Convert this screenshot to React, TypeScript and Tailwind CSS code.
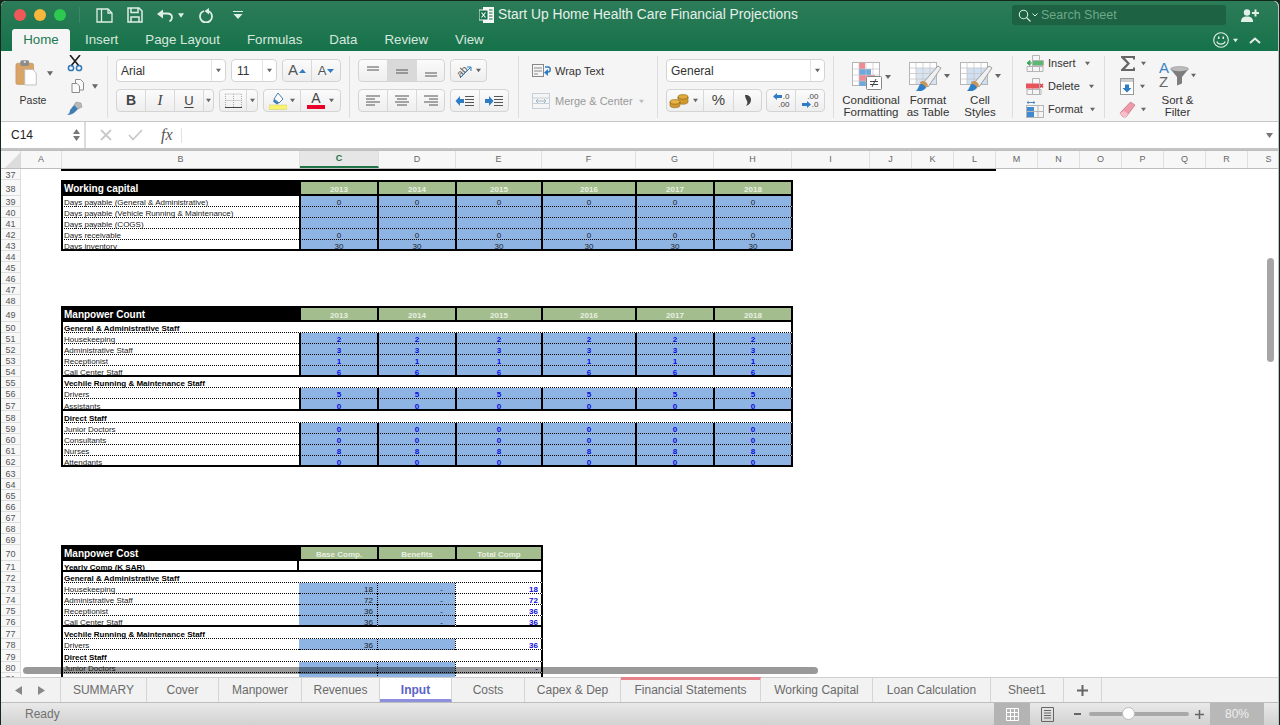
import React from "react";

const DOT = "border-b border-b-black [border-bottom-style:dotted]";
const THICK = "border-b-2 border-b-black";
const DOTL = "border-l border-l-black [border-left-style:dotted]";

function Caret({ c = "#666", w = 7 }: { c?: string; w?: number }) {
  return (
    <svg width={w} height="5" viewBox="0 0 7 5" className="shrink-0">
      <path d="M0 0h7L3.5 5z" fill={c} />
    </svg>
  );
}

function Sep() {
  return <div className="w-px h-[62px] mt-[5px] bg-[#dddddd] shrink-0" />;
}

function Btn({ w, active, children, last }: { w: string; active?: boolean; children?: React.ReactNode; last?: boolean }) {
  return (
    <div
      className={`${w} h-full flex items-center justify-center ${last ? "" : "border-r border-r-[#d9d9d9]"} ${
        active ? "bg-[#d9d9d9]" : ""
      }`}
    >
      {children}
    </div>
  );
}

function Group({ w, children }: { w: string; children?: React.ReactNode }) {
  return (
    <div className={`${w} h-[23px] flex items-stretch rounded-[4px] border border-[#d4d4d4] bg-linear-to-b from-[#fbfbfb] to-[#eeeeee] overflow-hidden shrink-0`}>
      {children}
    </div>
  );
}

function Lines({ rows, c = "#555" }: { rows: number[][]; c?: string }) {
  return (
    <svg width="16" height="14" viewBox="0 0 16 14" fill="none">
      {rows.map((r, i) => (
        <path key={i} d={`M${r[0]} ${r[2]}H${r[1]}`} stroke={c} strokeWidth="1" />
      ))}
    </svg>
  );
}

function Indent({ right }: { right?: boolean }) {
  return (
    <svg width="20" height="14" viewBox="0 0 20 14" fill="none">
      <path d="M10 2.5h9M10 5.5h9M10 8.5h9M10 11.5h9" stroke="#555" strokeWidth="1" />
      {right ? (
        <path d="M1 5h4V2l4.5 5L5 12V9H1z" fill="#2d7cc4" />
      ) : (
        <path d="M9 5H5V2L.5 7 5 12V9h4z" fill="#2d7cc4" />
      )}
    </svg>
  );
}

function PaintBrush() {
  return (
    <g>
      <path d="M14 21 L29 4 L32 6 L19 25z" fill="#f0f0f0" stroke="#8a8a8a" strokeWidth=".8" />
      <path d="M11 20 c3-2 6-1 8 3 l-2 3 -5-2z" fill="#c9955a" />
      <path d="M4 30 c4 0 5-4 7-8 c2-.5 5 1 6 4 c-3 3-8 5-13 4z" fill="#2f7fc6" />
    </g>
  );
}

function TableGrid({ fill }: { fill: string }) {
  return (
    <g>
      <rect x=".5" y=".5" width="27" height="22" fill="#fff" stroke="#b5b5b5" />
      <rect x="7" y="6" width="20" height="16" fill={fill} />
      <path d="M.5 6h27M.5 11.5h27M.5 17h27M7 .5v22M14 .5v22M21 .5v22" stroke="#c6c6c6" strokeWidth=".8" />
    </g>
  );
}

function Ribbon() {
  return (
    <div className="flex h-[70px] items-start bg-[#f5f5f5] shrink-0">
      {/* Clipboard */}
      <div className="w-[106px] flex shrink-0">
        <div className="ml-[14px] w-[38px] pt-[6px] flex flex-col">
          <div className="flex items-center">
            <svg width="26" height="32" viewBox="0 0 26 32">
              <rect x="1" y="5" width="20" height="24" rx="2" fill="#d9a468" stroke="#b98a52" strokeWidth=".6" />
              <rect x="6" y="1.5" width="10" height="6.5" rx="2" fill="#8c8c8c" />
              <circle cx="11" cy="3.5" r="1.2" fill="#eee" />
              <path d="M11 12h9l4 4v13.5H11z" fill="#fff" stroke="#bcbcbc" />
            </svg>
            <div className="ml-[9px]">
              <Caret w={6} />
            </div>
          </div>
          <div className="mt-[5px] w-[36px] text-center text-[10.5px] leading-[12px] text-[#333]">Paste</div>
        </div>
        <div className="ml-[13px] flex flex-col items-center pt-[4px]">
          <svg width="16" height="17" viewBox="0 0 16 17" fill="none">
            <path d="M3 0l9 11M13 0L4 11" stroke="#1d1d1d" strokeWidth="1.6" />
            <circle cx="4" cy="13" r="2.6" stroke="#2f78b7" strokeWidth="1.5" />
            <circle cx="12" cy="13" r="2.6" stroke="#2f78b7" strokeWidth="1.5" />
          </svg>
          <div className="flex items-center mt-[6px] -mr-[18px]">
            <svg width="16" height="16" viewBox="0 0 16 16" fill="#fafafa" stroke="#8c8c8c">
              <path d="M5.5 1.5h5l3 3v7.5h-8z" />
              <path d="M2 5.5h5l2.500 2.500v6.500H2z" />
            </svg>
            <div className="ml-[6px]">
              <Caret w={6} />
            </div>
          </div>
          <svg width="17" height="16" viewBox="0 0 17 16" className="mt-[7px]">
            <path d="M10 1l5 1 1 4-4 2-4-4z" fill="#b8b8b8" stroke="#888" strokeWidth=".5" />
            <path d="M8 4l4 4-3 3c-1 1-4 3-8 3 2-1 3-3 3-5z" fill="#3f7db4" />
          </svg>
        </div>
      </div>
      <Sep />
      {/* Font */}
      <div className="ml-[8px] mt-[8px] w-[225px] flex flex-col gap-[7px] shrink-0">
        <div className="flex gap-[5px]">
          <div className="w-[110px] h-[23px] flex items-center rounded-[4px] border border-[#d4d4d4] bg-white pl-[4px] text-[12px] text-[#333]">
            <span className="flex-1">Arial</span>
            <div className="w-[14px] h-[21px] border-l border-l-[#e3e3e3] flex items-center justify-center">
              <Caret w={5} />
            </div>
          </div>
          <div className="w-[46px] h-[23px] flex items-center rounded-[4px] border border-[#d4d4d4] bg-white pl-[5px] text-[12px] text-[#333]">
            <span className="flex-1">11</span>
            <div className="w-[14px] h-[21px] border-l border-l-[#e3e3e3] flex items-center justify-center">
              <Caret w={5} />
            </div>
          </div>
          <Group w="w-[59px]">
            <Btn w="w-[29px]">
              <span className="text-[15px] text-[#555]">A</span>
              <svg width="7" height="4" viewBox="0 0 7 4" className="ml-px">
                <path d="M0 4h7L3.5 0z" fill="#2d7cc4" />
              </svg>
            </Btn>
            <Btn w="flex-1" last>
              <span className="text-[13px] text-[#555]">A</span>
              <svg width="7" height="4" viewBox="0 0 7 4" className="ml-px">
                <path d="M0 0h7L3.5 4z" fill="#2d7cc4" />
              </svg>
            </Btn>
          </Group>
        </div>
        <div className="flex gap-[5px]">
          <Group w="w-[98px]">
            <Btn w="w-[29px]">
              <span className="text-[14px] font-bold text-[#444]">B</span>
            </Btn>
            <Btn w="w-[29px]">
              <span className="text-[15px] italic font-['Liberation_Serif',serif] text-[#444]">I</span>
            </Btn>
            <Btn w="w-[29px]">
              <span className="text-[13px] text-[#444] underline underline-offset-2">U</span>
            </Btn>
            <Btn w="flex-1" last>
              <Caret w={5} />
            </Btn>
          </Group>
          <Group w="w-[39px]">
            <Btn w="w-[27px]">
              <svg width="17" height="16" viewBox="0 0 17 16" fill="none">
                <path d="M.5 1h16M.5 7.500h16M.5 1v13M8.500 1v13M16.500 1v13" stroke="#aaa" strokeDasharray="1 1" />
                <path d="M0 14.500h17" stroke="#444" />
              </svg>
            </Btn>
            <Btn w="flex-1" last>
              <Caret w={5} />
            </Btn>
          </Group>
          <Group w="w-[78px]">
            <div className="w-[37px] h-full flex items-center justify-center gap-[3px] border-r border-r-[#d9d9d9]">
              <svg width="18" height="18" viewBox="0 0 18 18">
                <path d="M9 1l5 6-4 4-5-4z" fill="#fff" stroke="#4a7fb0" />
                <path d="M5 7l5 4-2 1.500-4-3z" fill="#3f7db4" />
                <rect x="0" y="13" width="18" height="4.500" fill="#fbf36b" stroke="#c9c97a" strokeWidth=".5" />
              </svg>
              <Caret w={5} />
            </div>
            <div className="flex-1 flex items-center justify-center gap-[4px]">
              <div className="flex flex-col items-center w-[18px]">
                <span className="text-[14px] leading-[12px] text-[#444]">A</span>
                <div className="w-[18px] h-[4px] mt-px bg-[#e8002a]" />
              </div>
              <Caret w={5} />
            </div>
          </Group>
        </div>
      </div>
      <div className="ml-[8px]">
        <Sep />
      </div>
      {/* Alignment */}
      <div className="ml-[8px] mt-[8px] flex flex-col gap-[7px] shrink-0">
        <div className="flex gap-[5px]">
          <Group w="w-[87px]">
            <Btn w="w-[29px]">
              <Lines rows={[[2, 14, 3], [2, 14, 6]]} />
            </Btn>
            <Btn w="w-[29px]" active>
              <Lines rows={[[2, 14, 6], [2, 14, 9]]} />
            </Btn>
            <Btn w="flex-1" last>
              <Lines rows={[[2, 14, 9], [2, 14, 12]]} />
            </Btn>
          </Group>
          <Group w="w-[37px]">
            <div className="flex-1 flex items-center justify-center gap-[4px]">
              <div className="relative w-[16px] h-[16px]">
                <span className="block -rotate-45 text-[10px] leading-[14px] text-[#555]">ab</span>
                <svg width="16" height="16" viewBox="0 0 16 16" className="absolute left-0 top-0">
                  <path d="M4 15L15 4M11 4h4v4" stroke="#2d7cc4" fill="none" />
                </svg>
              </div>
              <Caret w={5} />
            </div>
          </Group>
        </div>
        <div className="flex gap-[5px]">
          <Group w="w-[87px]">
            <Btn w="w-[29px]">
              <Lines rows={[[1, 15, 2], [1, 10, 5], [1, 15, 8], [1, 10, 11]]} />
            </Btn>
            <Btn w="w-[29px]">
              <Lines rows={[[1, 15, 2], [3, 13, 5], [1, 15, 8], [3, 13, 11]]} />
            </Btn>
            <Btn w="flex-1" last>
              <Lines rows={[[1, 15, 2], [6, 15, 5], [1, 15, 8], [6, 15, 11]]} />
            </Btn>
          </Group>
          <Group w="w-[59px]">
            <Btn w="w-[29px]">
              <Indent />
            </Btn>
            <Btn w="flex-1" last>
              <Indent right />
            </Btn>
          </Group>
        </div>
      </div>
      <div className="ml-[9px]">
        <Sep />
      </div>
      {/* Wrap */}
      <div className="ml-[13px] w-[125px] shrink-0 flex flex-col mt-[9px] gap-[8px]">
        <div className="flex items-center h-[22px]">
          <svg width="20" height="14" viewBox="0 0 20 14" fill="none">
            <rect x=".5" y=".5" width="11" height="12" stroke="#888" />
            <path d="M2 4h8M2 7h8M2 10h4" stroke="#888" />
            <path d="M13 3h3c3 0 3 5 0 5h-1" stroke="#2d7cc4" strokeWidth="1.4" />
            <path d="M16 5v7l-4-3.500z" fill="#2d7cc4" />
          </svg>
          <span className="ml-[3px] text-[11px] text-[#333]">Wrap Text</span>
        </div>
        <div className="flex items-center h-[22px]">
          <svg width="18" height="16" viewBox="0 0 18 16" fill="none" stroke="#c6d0d8">
            <rect x=".5" y=".5" width="17" height="15" />
            <path d="M.5 5h17M.5 10.500h17" />
            <path d="M4 8h10M4 8l2-2M4 8l2 2M14 8l-2-2M14 8l-2 2" stroke="#9fb6c8" />
          </svg>
          <span className="ml-[5px] text-[11px] text-[#999]">Merge &amp; Center</span>
          <div className="ml-[6px]">
            <Caret w={5} c="#bbb" />
          </div>
        </div>
      </div>
      <Sep />
      {/* Number */}
      <div className="ml-[8px] mt-[8px] w-[159px] flex flex-col gap-[7px] shrink-0">
        <div className="h-[23px] flex items-center rounded-[4px] border border-[#d4d4d4] bg-white pl-[4px] text-[12px] text-[#333]">
          <span className="flex-1">General</span>
          <div className="w-[14px] h-[21px] border-l border-l-[#e3e3e3] flex items-center justify-center">
            <Caret w={5} />
          </div>
        </div>
        <div className="flex gap-[4px]">
          <Group w="w-[96px]">
            <div className="w-[37px] h-full flex items-center pl-[2px] gap-[4px] border-r border-r-[#d9d9d9]">
              <svg width="20" height="16" viewBox="0 0 20 16">
                <ellipse cx="14" cy="4" rx="5" ry="2.400" fill="#e0a93a" stroke="#8b6a1e" strokeWidth=".6" />
                <path d="M9 4v5c0 3 10 3 10 0V4c0 3-10 3-10 0z" fill="#d2982e" stroke="#8b6a1e" strokeWidth=".6" />
                <ellipse cx="6" cy="9" rx="5" ry="2.400" fill="#eab344" stroke="#8b6a1e" strokeWidth=".6" />
                <path d="M1 9v3.500c0 3 10 3 10 0V9c0 3-10 3-10 0z" fill="#d2982e" stroke="#8b6a1e" strokeWidth=".6" />
              </svg>
              <Caret w={5} />
            </div>
            <Btn w="w-[30px]">
              <span className="text-[15px] text-[#444]">%</span>
            </Btn>
            <Btn w="flex-1" last>
              <svg width="8" height="13" viewBox="0 0 8 13">
                <path d="M1 1c4-.5 6 2 6 5 0 3-2 5-5 6 1-2 2-3 1-5C2 5 1 3 1 1z" fill="#444" />
              </svg>
            </Btn>
          </Group>
          <Group w="w-[59px]">
            <Btn w="w-[29px]">
              <div className="flex flex-col items-end text-[8px] leading-[8px] text-[#444]">
                <span className="flex items-center">
                  <svg width="9" height="7" viewBox="0 0 9 7">
                    <path d="M9 2H4V0L0 3.500 4 7V5h5z" fill="#2d7cc4" />
                  </svg>
                  <span className="ml-px">.0</span>
                </span>
                <span>.00</span>
              </div>
            </Btn>
            <Btn w="flex-1" last>
              <div className="flex flex-col items-end text-[8px] leading-[8px] text-[#444]">
                <span>.00</span>
                <span className="flex items-center">
                  <svg width="9" height="7" viewBox="0 0 9 7">
                    <path d="M0 2h5V0l4 3.500L5 7V5H0z" fill="#2d7cc4" />
                  </svg>
                  <span className="ml-px">.0</span>
                </span>
              </div>
            </Btn>
          </Group>
        </div>
      </div>
      <div className="ml-[8px]">
        <Sep />
      </div>
      {/* Styles */}
      <div className="w-[178px] shrink-0 flex text-[11.500px] leading-[12px] text-[#333]">
        <div className="w-[74px] flex flex-col items-center pt-[11px] whitespace-nowrap">
          <svg width="48" height="29" viewBox="0 0 48 29" className="mb-[3px]">
            <g transform="translate(5 0)">
              <rect x=".5" y=".5" width="27" height="23" fill="#fff" stroke="#b5b5b5" />
              <rect x="7" y="1" width="6" height="6" fill="#ef8a94" />
              <rect x="7" y="7" width="12" height="6" fill="#6ea8dc" />
              <rect x="7" y="13" width="16" height="6" fill="#ef8a94" />
              <rect x="7" y="19" width="8" height="5" fill="#6ea8dc" />
              <path d="M.5 7h27M.5 13h27M.5 19h27M7 .5v23M14 .5v23M21 .5v23" stroke="#c6c6c6" strokeWidth=".7" />
              <rect x="14.500" y="14.500" width="15" height="13" rx="1" fill="#fff" stroke="#888" />
              <path d="M18 19.500h8M18 22.500h8M24 17l-4 8" stroke="#444" />
            </g>
            <path d="M38 13h6l-3 4z" fill="#666" />
          </svg>
          <span>Conditional</span>
          <span>Formatting</span>
        </div>
        <div className="w-[40px] flex flex-col items-center pt-[11px] whitespace-nowrap">
          <svg width="48" height="29" viewBox="0 0 48 29" className="mb-[3px] shrink-0">
            <g transform="translate(5 0)">
              <TableGrid fill="#d8e4f2" />
              <PaintBrush />
            </g>
            <path d="M40 12h6l-3 4z" fill="#666" />
          </svg>
          <span>Format</span>
          <span>as Table</span>
        </div>
        <div className="w-[64px] flex flex-col items-center pt-[11px] whitespace-nowrap">
          <svg width="48" height="29" viewBox="0 0 48 29" className="mb-[3px]">
            <g transform="translate(4 0)">
              <TableGrid fill="#cfe0f3" />
              <PaintBrush />
            </g>
            <path d="M39 12h6l-3 4z" fill="#666" />
          </svg>
          <span>Cell</span>
          <span>Styles</span>
        </div>
      </div>
      <Sep />
      {/* Cells */}
      <div className="ml-[13px] w-[78px] shrink-0 mt-[1px] flex flex-col text-[11px] text-[#333]">
        <div className="h-[23px] flex items-center">
          <svg width="18" height="17" viewBox="0 0 18 17" fill="none">
            <path d="M6.500.5h7v16h-7zM1 11.500h16v5H1zM6.500 5.500h11v5h-11z" stroke="#b5b5b5" />
            <rect x="7" y="6" width="10" height="4" fill="#5aba6f" />
            <path d="M6 8H2M4 5.500L1 8l3 2.500z" fill="#3aa857" stroke="#3aa857" />
          </svg>
          <span className="ml-[4px]">Insert</span>
          <div className="ml-[9px]">
            <Caret w={5} />
          </div>
        </div>
        <div className="h-[23px] flex items-center">
          <svg width="18" height="17" viewBox="0 0 18 17" fill="none">
            <path d="M6.500.5h7v16h-7zM1 11.500h14v5H1z" stroke="#b5b5b5" />
            <rect x="0" y="5.500" width="13" height="5" fill="#e8525a" />
            <path d="M14 6l3 3.500M17 6l-3 3.500" stroke="#d83a42" strokeWidth="1.300" />
          </svg>
          <span className="ml-[4px]">Delete</span>
          <div className="ml-[9px]">
            <Caret w={5} />
          </div>
        </div>
        <div className="h-[23px] flex items-center">
          <svg width="18" height="17" viewBox="0 0 18 17" fill="none">
            <rect x=".5" y="4.500" width="17" height="12" stroke="#b5b5b5" />
            <rect x="1" y="6" width="7" height="10" fill="#3f8ad0" />
            <path d="M12 4.500v12M.5 10.500h17" stroke="#b5b5b5" />
            <path d="M1 1.500h8M1 1.500l1.500-1M1 1.500l1.500 1M9 1.500l-1.500-1M9 1.500l-1.500 1" stroke="#4a87c0" />
          </svg>
          <span className="ml-[4px]">Format</span>
          <div className="ml-[7px]">
            <Caret w={5} />
          </div>
        </div>
      </div>
      <Sep />
      {/* Editing */}
      <div className="ml-[15px] w-[30px] shrink-0 mt-[1px] flex flex-col">
        <div className="h-[23px] flex items-center">
          <svg width="15" height="15" viewBox="0 0 15 15" className="ml-[1px]">
            <path d="M0 0h14v3.500h-2V2H4l5 5.500L4 13h8v-1.500h2V15H0v-1.500L6 7.500 0 1.500z" fill="#666" />
          </svg>
          <div className="ml-[5px]">
            <Caret w={5} />
          </div>
        </div>
        <div className="h-[23px] flex items-center">
          <svg width="15" height="17" viewBox="0 0 15 17" fill="none">
            <rect x=".5" y=".5" width="13" height="16" fill="#fff" stroke="#999" />
            <rect x="1" y="1" width="12" height="3" fill="#ccc" />
            <path d="M5 6.500h4v3.500h2.500L7 14.500 2.500 10H5z" fill="#2d7cc4" />
          </svg>
          <div className="ml-[5px]">
            <Caret w={5} />
          </div>
        </div>
        <div className="h-[23px] flex items-center -ml-[1px]">
          <svg width="17" height="17" viewBox="0 0 17 17">
            <path d="M11.500 1L16 4 7 16l-3 0L1 12z" fill="#ee9aa8" stroke="#c07080" strokeWidth=".7" />
            <path d="M1 12l3 4h3l2-3-4-3z" fill="#f6c0ca" />
          </svg>
          <div className="ml-[5px]">
            <Caret w={5} />
          </div>
        </div>
      </div>
      <div className="w-[55px] shrink-0 flex flex-col items-center pt-[8px] whitespace-nowrap text-[11.500px] leading-[12px] text-[#333]">
        <div className="flex items-center h-[32px] mb-[3px]">
          <div className="flex flex-col w-[11px] text-[15px] leading-[14px] font-medium">
            <span className="text-[#3d84c6]">A</span>
            <span className="text-[#666]">Z</span>
          </div>
          <svg width="19" height="20" viewBox="0 0 19 20" className="mt-[2px]">
            <ellipse cx="9.500" cy="3" rx="9" ry="2.500" fill="#bbb" stroke="#888" strokeWidth=".5" />
            <path d="M.5 3l6.500 8v8.500l5-2V11l6.500-8c-2 3-16 3-18 0z" fill="#7d7d7d" />
          </svg>
          <div className="ml-[2px]">
            <Caret w={5} />
          </div>
        </div>
        <span>Sort &amp;</span>
        <span>Filter</span>
      </div>
    </div>
  );
}

function TitleBar() {
  return (
    <div className="h-[50px] shrink-0 rounded-t-[5px] bg-linear-to-b from-[#2c7c58] to-[#15724a] flex flex-col">
      <div className="h-[28px] flex items-center">
        <div className="ml-[13px] flex gap-[8px]">
          <div className="w-[12px] h-[12px] rounded-full bg-[#f0595a]" />
          <div className="w-[12px] h-[12px] rounded-full bg-[#f6b73c]" />
          <div className="w-[12px] h-[12px] rounded-full bg-[#2cc84f]" />
        </div>
        <div className="ml-[13px] w-px h-[16px] bg-white/10" />
        <svg width="17" height="15" viewBox="0 0 17 15" fill="none" stroke="#dfeee6" strokeWidth="1.300" className="ml-[16px]">
          <path d="M1 1h11l4 4v9H1z" />
          <path d="M5.500 1v13M12 1v4h4" />
        </svg>
        <svg width="16" height="16" viewBox="0 0 16 16" fill="none" stroke="#dfeee6" strokeWidth="1.500" className="ml-[14px]">
          <path d="M1 1h11l3 3v11H1z" />
          <path d="M4 1v4.500h7V1M4 15v-5h8v5" />
        </svg>
        <svg width="16" height="13" viewBox="0 0 16 13" fill="none" className="ml-[14px]">
          <path d="M5 4.500h5c3 0 5 1.500 5 4 0 2-1 3-2.500 4" stroke="#dfeee6" strokeWidth="1.800" />
          <path d="M0 5l6-4.500v9z" fill="#dfeee6" />
        </svg>
        <div className="ml-[5px]">
          <Caret w={6} c="#dfeee6" />
        </div>
        <svg width="15" height="15" viewBox="0 0 15 15" fill="none" className="ml-[15px]">
          <path d="M5 3C2 4 1 6 1 8.500a6 6 0 0 0 12 0C13 6 11.500 4 9 3" stroke="#dfeee6" strokeWidth="1.800" />
          <path d="M10 0v6.500L5.500 3z" fill="#dfeee6" />
        </svg>
        <svg width="12" height="8" viewBox="0 0 12 8" className="ml-[18px]">
          <path d="M1 .5h10" stroke="#dfeee6" strokeWidth="1.200" />
          <path d="M1.500 3h9L6 8z" fill="#dfeee6" />
        </svg>
        <svg width="15" height="16" viewBox="0 0 15 16" className="ml-[235px]">
          <rect x="4" y="0" width="11" height="16" fill="#f4f7f5" />
          <rect x="0" y="3" width="9" height="10" fill="#17704a" stroke="#f4f7f5" />
          <path d="M2.500 5.500l4 5M6.500 5.500l-4 5" stroke="#f4f7f5" strokeWidth="1.200" />
          <path d="M10 3h3.500M10 6h3.500M10 9h3.500M10 12h3.500" stroke="#17704a" />
        </svg>
        <span className="ml-[4px] text-[13.800px] text-[#e4f0ea] whitespace-nowrap">Start Up Home Health Care Financial Projections</span>
        <div className="ml-auto w-[214px] h-[20px] rounded-[3px] bg-[#1c6243] flex items-center pl-[6px]">
          <svg width="13" height="13" viewBox="0 0 13 13" fill="none" stroke="#dcebe3" strokeWidth="1.100">
            <circle cx="5.500" cy="5.500" r="4.200" />
            <path d="M8.500 8.500L12.500 12.500" />
          </svg>
          <svg width="6" height="4" viewBox="0 0 6 4" fill="none" stroke="#dcebe3" className="ml-[1px]">
            <path d="M.5.500L3 3 5.500.500" />
          </svg>
          <span className="ml-[3px] text-[12.500px] text-[#6ea98a]">Search Sheet</span>
        </div>
        <svg width="18" height="13" viewBox="0 0 18 13" className="ml-[15px] mr-[19px]">
          <circle cx="6" cy="3.500" r="3.200" fill="#e3efe9" />
          <path d="M0 13c0-4 2-5.500 6-5.500s6 1.500 6 5.500z" fill="#e3efe9" />
          <path d="M11 4h7M14.500 .5v7" stroke="#e3efe9" strokeWidth="2" />
        </svg>
      </div>
      <div className="h-[22px] flex items-stretch text-[13.300px] font-medium text-[#d8e8df]">
        <div className="ml-[11px] w-[58px] h-[22px] rounded-t-[3px] bg-[#f5f5f5] flex items-center justify-center text-[#217a52]">Home</div>
        <div className="ml-[15px] flex items-center gap-[27px]">
          <span>Insert</span>
          <span>Page Layout</span>
          <span>Formulas</span>
          <span>Data</span>
          <span>Review</span>
          <span>View</span>
        </div>
        <div className="ml-auto flex items-center mr-[17px]">
          <svg width="16" height="16" viewBox="0 0 16 16" fill="none" stroke="#e3efe9" strokeWidth="1.100">
            <circle cx="8" cy="8" r="7.300" />
            <path d="M3.800 9.500c1.200 3.500 7 3.500 8.400 0" />
            <path d="M5.700 4.500v2.500M10.300 4.500v2.500" strokeWidth="1.500" />
          </svg>
          <div className="ml-[4px]">
            <Caret w={5} c="#e3efe9" />
          </div>
          <svg width="12" height="7" viewBox="0 0 12 7" fill="none" stroke="#e3efe9" strokeWidth="2" className="ml-[11px]">
            <path d="M1 6l5-4.500L11 6" />
          </svg>
        </div>
      </div>
    </div>
  );
}

function FormulaBar() {
  return (
    <div className="h-[29px] shrink-0 flex items-center bg-white border-b-2 border-b-[#c4c4c4] border-t border-t-[#c8c8c8]">
      <div className="w-[85px] h-[26px] flex items-center pl-[10px] border-r-2 border-r-[#dcdcdc] text-[12px] text-[#222]">
        <span className="flex-1">C14</span>
        <div className="mr-[4px] flex flex-col gap-[2px]">
          <svg width="7" height="5" viewBox="0 0 7 5">
            <path d="M0 5h7L3.500 0z" fill="#777" />
          </svg>
          <svg width="7" height="5" viewBox="0 0 7 5">
            <path d="M0 0h7L3.500 5z" fill="#777" />
          </svg>
        </div>
      </div>
      <svg width="12" height="12" viewBox="0 0 12 12" fill="none" stroke="#c9c9c9" strokeWidth="1.800" className="ml-[14px]">
        <path d="M1 1l10 10M11 1L1 11" />
      </svg>
      <svg width="15" height="12" viewBox="0 0 15 12" fill="none" stroke="#c9c9c9" strokeWidth="1.800" className="ml-[16px]">
        <path d="M1 6l4 4.500L14 1" />
      </svg>
      <span className="ml-[18px] text-[16px] italic font-['Liberation_Serif',serif] text-[#555]">fx</span>
      <div className="ml-[8px] w-px h-[15px] bg-[#e2e2e2]" />
      <div className="ml-auto mr-[5px]">
        <Caret c="#777" />
      </div>
    </div>
  );
}

const COLS: [string, string][] = [
  ["A", "w-[41px]"],
  ["B", "w-[238px]"],
  ["C", "w-[79px]"],
  ["D", "w-[77px]"],
  ["E", "w-[86px]"],
  ["F", "w-[94px]"],
  ["G", "w-[78px]"],
  ["H", "w-[78px]"],
  ["I", "w-[78px]"],
  ["J", "w-[42px]"],
  ["K", "w-[42px]"],
  ["L", "w-[42px]"],
  ["M", "w-[42px]"],
  ["N", "w-[42px]"],
  ["O", "w-[42px]"],
  ["P", "w-[42px]"],
  ["Q", "w-[42px]"],
  ["R", "w-[42px]"],
  ["S", "w-[42px]"],
];

function ColHeader() {
  return (
    <div className="h-[19px] shrink-0 flex overflow-hidden border-y border-y-[#bdbdbd] bg-[#f7f7f7] text-[9px] text-[#666]">
      <div className="w-[20px] h-full shrink-0 border-r border-r-[#d8d8d8] flex items-end justify-end">
        <svg width="15" height="15" viewBox="0 0 15 15">
          <path d="M15 0v15H0z" fill="#dcdcdc" />
        </svg>
      </div>
      {COLS.map(([l, w]) => (
        <div
          key={l}
          className={`${w} shrink-0 h-full flex items-center justify-center border-r border-r-[#e0e0e0] ${
            l === "C" ? "bg-[#e6e6e6] font-bold text-[#217346] border-b-2 border-b-[#217346]" : ""
          }`}
        >
          {l}
        </div>
      ))}
    </div>
  );
}

function Row({ n, h = "h-[11px]", big, children }: { n: number; h?: string; big?: boolean; children?: React.ReactNode }) {
  return (
    <div className={`flex shrink-0 ${h}`}>
      <div
        className={`w-[20px] h-full shrink-0 flex items-end justify-center border-r border-b border-[#dedede] bg-[#f8f8f8] text-[9px] leading-[7px] text-[#555] ${
          big ? "pb-[2px]" : ""
        }`}
      >
        {n}
      </div>
      <div className="w-[40px] shrink-0" />
      {children}
    </div>
  );
}

const W6 = ["w-[78px]", "w-[78px]", "w-[86px]", "w-[94px]", "w-[78px]", "w-[80px] border-r-2 border-r-black"];
const W3 = ["w-[78px]", "w-[78px]", "w-[88px] border-r-2 border-r-black"];

function Head({ n, title, labels, ws }: { n: number; title: string; labels: string[]; ws: string[] }) {
  return (
    <Row n={n} h="h-[16px]" big>
      <div className="w-[238px] h-full shrink-0 bg-black text-white font-bold text-[10px] leading-[17px] pl-[3px]">{title}</div>
      {labels.map((l, i) => (
        <div
          key={i}
          className={`${ws[i]} h-full shrink-0 border-2 border-black ${i === labels.length - 1 ? "" : "border-r-0"} bg-[#a4bd8f] text-center text-[8px] leading-[12px] pt-[2px] font-bold text-[#e8f0e0]`}
        >
          {l}
        </div>
      ))}
    </Row>
  );
}

function Label({ text, thick, bold, w = "w-[238px]" }: { text?: string; thick?: boolean; bold?: boolean; w?: string }) {
  return (
    <div
      className={`${w} h-full shrink-0 flex items-end border-l-2 border-l-black pl-px text-[8px] whitespace-nowrap text-[#222] ${
        thick ? `${THICK} leading-[5px]` : `${DOT} leading-[7px]`
      } ${bold ? "font-bold text-black" : ""}`}
    >
      {text}
    </div>
  );
}

function YearRow({ n, label, v, blue, thick }: { n: number; label: string; v?: string; blue?: boolean; thick?: boolean }) {
  return (
    <Row n={n}>
      <Label text={label} thick={thick} />
      {W6.map((w, i) => (
        <div
          key={i}
          className={`${w} h-full shrink-0 flex items-end justify-center border-l-2 border-l-black bg-[#8db4e2] text-[8px] ${
            thick ? `${THICK} leading-[5px]` : `${DOT} leading-[7px]`
          } ${blue ? "font-bold text-[#0a0ae0]" : "text-[#1b1b2a]"}`}
        >
          {v}
        </div>
      ))}
    </Row>
  );
}

function SpanRow({ n, h, label, w }: { n: number; h?: string; label: string; w: string }) {
  return (
    <Row n={n} h={h}>
      <div className={`${w} h-full shrink-0 flex items-end border-x-2 border-x-black pl-px text-[8px] leading-[7px] font-bold text-black whitespace-nowrap ${DOT}`}>
        {label}
      </div>
    </Row>
  );
}

function CostRow({
  n,
  h,
  label,
  base,
  ben,
  total,
  thick,
}: {
  n: number;
  h?: string;
  label?: string;
  base?: string;
  ben?: string;
  total?: string;
  thick?: boolean;
}) {
  const b = thick ? `${THICK} leading-[5px]` : `${DOT} leading-[7px]`;
  return (
    <Row n={n} h={h}>
      <Label text={label} thick={thick} />
      <div className={`w-[78px] h-full shrink-0 flex items-end justify-end pr-[4px] bg-[#8db4e2] text-[8px] text-[#1b1b2a] ${b}`}>{base}</div>
      <div className={`w-[78px] h-full shrink-0 flex items-end justify-end pr-[12px] bg-[#8db4e2] text-[8px] text-[#1b1b2a] ${DOTL} ${b}`}>{ben}</div>
      <div className={`w-[88px] h-full shrink-0 flex items-end justify-end pr-[3px] text-[8px] font-bold text-[#0a0ae0] border-r-2 border-r-black ${DOTL} ${b}`}>{total}</div>
    </Row>
  );
}

function Sheet() {
  const blank = (from: number, to: number) =>
    Array.from({ length: to - from + 1 }, (_, i) => <Row key={from + i} n={from + i} />);
  return (
    <div className="relative h-[508px] shrink-0 overflow-hidden bg-white flex flex-col">
      <Row n={37}>
        <div className="w-[935px] h-[2px] bg-black" />
      </Row>
      <Head n={38} title="Working capital" labels={["2013", "2014", "2015", "2016", "2017", "2018"]} ws={W6} />
      <YearRow n={39} label="Days payable (General & Administrative)" v="0" />
      <YearRow n={40} label="Days payable (Vehicle Running & Maintenance)" />
      <YearRow n={41} label="Days payable (COGS)" />
      <YearRow n={42} label="Days receivable" v="0" />
      <YearRow n={43} label="Days inventory" v="30" thick />
      {blank(44, 48)}
      <Head n={49} title="Manpower Count" labels={["2013", "2014", "2015", "2016", "2017", "2018"]} ws={W6} />
      <SpanRow n={50} label="General & Administrative Staff" w="w-[732px]" />
      <YearRow n={51} label="Housekeeping" v="2" blue />
      <YearRow n={52} label="Administrative Staff" v="3" blue />
      <YearRow n={53} label="Receptionist" v="1" blue />
      <YearRow n={54} label="Call Center Staff" v="6" blue thick />
      <SpanRow n={55} label="Vechile Running & Maintenance Staff" w="w-[732px]" />
      <YearRow n={56} label="Drivers" v="5" blue />
      <Row n={57} h="h-[12px]">
        <Label text="Assistants" thick />
        {W6.map((w, i) => (
          <div key={i} className={`${w} h-full shrink-0 flex items-end justify-center border-l-2 border-l-black bg-[#8db4e2] text-[8px] leading-[5px] font-bold text-[#0a0ae0] ${THICK}`}>
            0
          </div>
        ))}
      </Row>
      <SpanRow n={58} h="h-[12px]" label="Direct Staff" w="w-[732px]" />
      <YearRow n={59} label="Junior Doctors" v="0" blue />
      <YearRow n={60} label="Consultants" v="0" blue />
      <YearRow n={61} label="Nurses" v="8" blue />
      <YearRow n={62} label="Attendants" v="0" blue thick />
      <Row n={63} h="h-[12px]" />
      {blank(64, 69)}
      <Head n={70} title="Manpower Cost" labels={["Base Comp.", "Benefits", "Total Comp"]} ws={W3} />
      <Row n={71}>
        <div className={`w-[238px] h-full shrink-0 flex items-end border-x-2 border-x-black pl-px text-[8px] leading-[5px] font-bold text-black ${THICK}`}>Yearly Comp (K SAR)</div>
        <div className={`w-[244px] h-full shrink-0 border-r-2 border-r-black ${THICK}`} />
      </Row>
      <SpanRow n={72} label="General & Administrative Staff" w="w-[482px]" />
      <CostRow n={73} label="Housekeeping" base="18" ben="-" total="18" />
      <CostRow n={74} label="Administrative Staff" base="72" ben="-" total="72" />
      <CostRow n={75} label="Receptionist" base="36" ben="-" total="36" />
      <CostRow n={76} label="Call Center Staff" base="36" ben="-" total="36" thick />
      <SpanRow n={77} h="h-[12px]" label="Vechile Running & Maintenance Staff" w="w-[482px]" />
      <CostRow n={78} label="Drivers" base="36" total="36" />
      <SpanRow n={79} h="h-[12px]" label="Direct Staff" w="w-[482px]" />
      <CostRow n={80} label="Junior Doctors" total="-" />
      <CostRow n={81} />
      {/* overlay scrollbars */}
      <div className="absolute left-[22px] top-[498px] w-[795px] h-[7px] rounded-full bg-black/40" />
      <div className="absolute right-[4px] top-[89px] w-[7px] h-[104px] rounded-full bg-[#a6a6a6]" />
    </div>
  );
}

const TABS: [string, string][] = [
  ["SUMMARY", "w-[86px]"],
  ["Cover", "w-[72px]"],
  ["Manpower", "w-[83px]"],
  ["Revenues", "w-[78px]"],
  ["Input", "w-[72px]"],
  ["Costs", "w-[73px]"],
  ["Capex & Dep", "w-[96px]"],
  ["Financial Statements", "w-[140px]"],
  ["Working Capital", "w-[112px]"],
  ["Loan Calculation", "w-[118px]"],
  ["Sheet1", "w-[73px]"],
];

function TabBar() {
  return (
    <div className="h-[26px] shrink-0 flex bg-[#f2f2f2] border-t border-t-[#d0d0d0] border-b border-b-[#bdbdbd] text-[12px] text-[#6a6a6a]">
      <div className="w-[60px] h-full flex items-center border-r border-r-[#d5d5d5]">
        <svg width="7" height="9" viewBox="0 0 7 9" className="ml-[14px]">
          <path d="M7 0v9L0 4.500z" fill="#888" />
        </svg>
        <svg width="7" height="9" viewBox="0 0 7 9" className="ml-[16px]">
          <path d="M0 0v9l7-4.500z" fill="#888" />
        </svg>
      </div>
      {TABS.map(([t, w]) => (
        <div
          key={t}
          className={`${w} shrink-0 h-full flex items-center justify-center border-r border-r-[#d5d5d5] ${
            t === "Input" ? "bg-white font-bold text-[#5b62c8] border-b-[3px] border-b-[#8f8fe0] pt-[2px]" : ""
          } ${t === "Financial Statements" ? "border-t-[3px] border-t-[#e8808a] -mt-px pb-[2px]" : ""}`}
        >
          {t}
        </div>
      ))}
      <div className="w-[38px] h-full flex items-center justify-center border-r border-r-[#d5d5d5]">
        <svg width="11" height="11" viewBox="0 0 11 11">
          <path d="M5.500 0v11M0 5.500h11" stroke="#666" strokeWidth="2" />
        </svg>
      </div>
    </div>
  );
}

function StatusBar() {
  return (
    <div className="h-[22px] shrink-0 flex items-center bg-linear-to-b from-[#e9e9e9] to-[#d2d2d2] text-[12px]">
      <span className="ml-[24px] text-[#707070]">Ready</span>
      <div className="ml-auto h-full w-[36px] bg-[#b4b4b4] flex items-center justify-center">
        <svg width="13" height="13" viewBox="0 0 13 13" fill="none" stroke="#fff">
          <path d="M.5.500h12v12H.5zM4.500.500v12M8.500.500v12M.5 4.500h12M.5 8.500h12" />
        </svg>
      </div>
      <div className="w-[34px] flex items-center justify-center">
        <svg width="13" height="15" viewBox="0 0 13 15" fill="none" stroke="#666">
          <path d="M.5.500h12v14H.5zM3 3.500h7M3 6h7M3 8.500h7M3 11h7" />
        </svg>
      </div>
      <div className="ml-[10px] w-[7px] h-[2px] bg-[#666]" />
      <div className="ml-[8px] relative w-[100px] h-[4px] rounded-full bg-[#a8a8a8]">
        <div className="absolute left-[33px] -top-[5px] w-[13px] h-[13px] rounded-full bg-white border border-[#bbb]" />
      </div>
      <svg width="9" height="9" viewBox="0 0 9 9" className="ml-[6px]">
        <path d="M4.500 0v9M0 4.500h9" stroke="#666" strokeWidth="1.500" />
      </svg>
      <div className="ml-[6px] mr-[14px] h-full w-[54px] bg-[#b8b8b8] flex items-center justify-center text-[#eeeeee]">80%</div>
    </div>
  );
}

export default function App() {
  return (
    <div className="w-[1280px] h-[725px] bg-[#15281e] overflow-hidden pt-px font-['Liberation_Sans',Arial,sans-serif]">
      <div className="ml-px w-[1278px] h-[724px] flex flex-col rounded-t-[5px] overflow-hidden bg-white border-r border-r-[#c0c0c0]">
        <TitleBar />
        <Ribbon />
        <FormulaBar />
        <ColHeader />
        <Sheet />
        <TabBar />
        <StatusBar />
      </div>
    </div>
  );
}
